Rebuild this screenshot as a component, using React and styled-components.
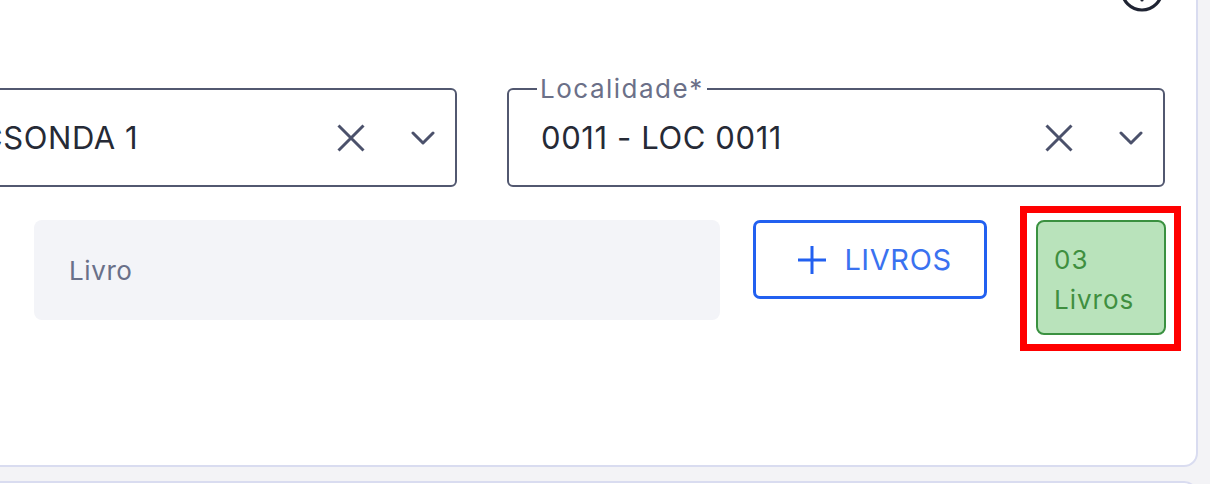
import React from "react";
import styled, { createGlobalStyle } from "styled-components";

const GlobalStyle = createGlobalStyle`
  body {
    margin: 0;
    background: #f3f3f6;
    font-family: Inter, "Noto Sans", sans-serif;
  }
`;

const Page = styled.div`
  width: 1210px;
  height: 484px;
  overflow: hidden;
  padding-right: 12px;
  box-sizing: border-box;
`;

const Card = styled.div`
  margin: -60px 0 0 -233px;
  background: #fff;
  border: 2px solid #d9dcf0;
  border-radius: 14px;
  padding: 24px 30px 130px;
`;

const NextCard = styled(Card)`
  margin-top: 14px;
  height: 40px;
  padding: 0;
`;

const Header = styled.div`
  display: flex;
  justify-content: flex-end;
  height: 48px;
  margin-bottom: 74px;
`;

const Row = styled.div`
  display: flex;
  align-items: flex-start;
  gap: ${p => p.gap}px;
  margin-left: ${p => p.indent || 0}px;
  margin-bottom: ${p => p.bottom || 0}px;

  & > * {
    flex-shrink: 0;
  }
`;

const SelectBox = styled.div`
  position: relative;
  width: 658px;
  height: 99px;
  box-sizing: border-box;
  border: 2px solid #525870;
  border-radius: 6px;
  display: flex;
  align-items: center;
  padding: 0 20px 0 32px;
`;

const FloatLabel = styled.span`
  position: absolute;
  top: -16px;
  left: 28px;
  padding: 0 3px;
  background: #fff;
  color: #6b7088;
  font-size: 26px;
  letter-spacing: 1.5px;
  line-height: 30px;
`;

const Value = styled.span`
  flex: 1;
  min-width: 0;
  color: #262a36;
  font-size: 31px;
  letter-spacing: 0.6px;
  white-space: nowrap;
`;

const IconSlot = styled.span`
  display: flex;
  align-items: center;
  margin-left: ${p => p.gap}px;
`;

const BookField = styled.div`
  width: 686px;
  height: 100px;
  box-sizing: border-box;
  background: #f3f4f8;
  border-radius: 8px;
  display: flex;
  align-items: center;
  padding-left: 35px;
  color: #697089;
  font-size: 26px;
  letter-spacing: 0.6px;
`;

const AddButton = styled.button`
  width: 234px;
  height: 79px;
  box-sizing: border-box;
  border: 3px solid #2260f0;
  border-radius: 7px;
  background: #fff;
  color: #3a72f0;
  font-family: inherit;
  font-size: 29px;
  letter-spacing: 0.6px;
  display: flex;
  align-items: center;
  justify-content: center;
  gap: 18px;
  padding: 0 0 0 10px;
`;

const Highlight = styled.div`
  margin: -14px -15px -16px 0;
  border: 7px solid #ff0000;
  padding: 7px 8px 9px 9px;
`;

const CountBadge = styled.div`
  width: 130px;
  height: 115px;
  box-sizing: border-box;
  background: #b9e3bb;
  border: 2px solid #3a9140;
  border-radius: 8px;
  padding: 18px 0 0 16px;
  color: #3f8f3f;
  font-size: 26px;
  letter-spacing: 1px;
  line-height: 40px;
`;

const HelpIcon = () => (
  <svg width="48" height="48" viewBox="0 0 24 24" fill="none" stroke="#1f2433"
    strokeWidth="1.6" strokeLinecap="round" strokeLinejoin="round">
    <circle cx="12" cy="12" r="10" />
    <path d="M9.09 9a3 3 0 0 1 5.83 1c0 2-3 3-3 3" />
    <path d="M12 17h.01" />
  </svg>
);

const ClearIcon = () => (
  <svg width="28" height="28" viewBox="0 0 28 28" stroke="#4b516b" strokeWidth="3">
    <path d="M1.5 1.5L26.5 26.5M26.5 1.5L1.5 26.5" />
  </svg>
);

const ChevronIcon = () => (
  <svg width="24" height="14" viewBox="0 0 24 14" fill="none" stroke="#4b516b"
    strokeWidth="3" strokeLinecap="round" strokeLinejoin="round">
    <path d="M2 2l10 10 10-10" />
  </svg>
);

const PlusIcon = () => (
  <svg width="28" height="28" viewBox="0 0 28 28" stroke="#2260f0" strokeWidth="3">
    <path d="M14 0v28M0 14h28" />
  </svg>
);

const Select = ({ label, value }) => (
  <SelectBox>
    {label && <FloatLabel>{label}</FloatLabel>}
    <Value>{value}</Value>
    <IconSlot gap={0}>
      <ClearIcon />
    </IconSlot>
    <IconSlot gap={46}>
      <ChevronIcon />
    </IconSlot>
  </SelectBox>
);

export default function App() {
  return (
    <>
      <GlobalStyle />
      <Page>
        <Card>
          <Header>
            <HelpIcon />
          </Header>
          <Row gap={50} bottom={33}>
            <Select label="Sonda*" value="0001 - ESCSONDA 1" />
            <Select label="Localidade*" value="0011 - LOC 0011" />
          </Row>
          <Row gap={33} indent={235}>
            <BookField>Livro</BookField>
            <AddButton>
              <PlusIcon />
              LIVROS
            </AddButton>
            <Highlight>
              <CountBadge>
                03
                <br />
                Livros
              </CountBadge>
            </Highlight>
          </Row>
        </Card>
        <NextCard />
      </Page>
    </>
  );
}
